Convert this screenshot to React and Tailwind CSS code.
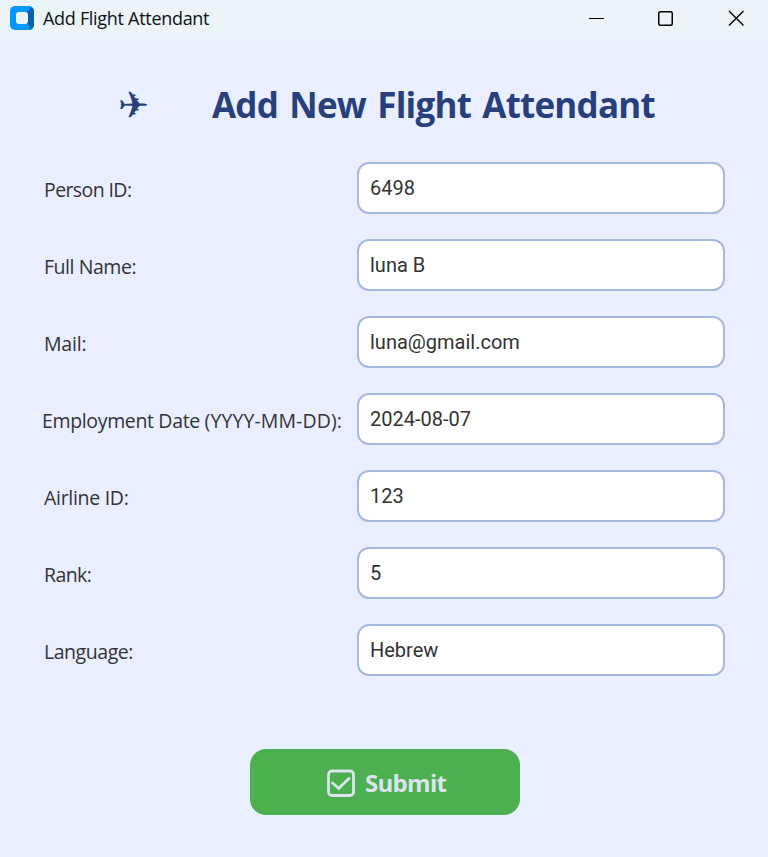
import React, { useState } from "react";

const fields = [
  { label: "Person ID:", value: "6498", style: "tracking-[-0.6px]" },
  { label: "Full Name:", value: "luna B", style: "tracking-[-0.45px]" },
  { label: "Mail:", value: "luna@gmail.com", style: "tracking-[-0.2px]" },
  {
    label: (
      <>
        Employment Date <span className="tracking-[0.1px]">(YYYY-MM-DD):</span>
      </>
    ),
    value: "2024-08-07",
    style: "tracking-[-0.35px] -ml-[2px]",
  },
  { label: "Airline ID:", value: "123", style: "tracking-[-0.3px]" },
  { label: "Rank:", value: "5", style: "tracking-[-0.6px]" },
  { label: "Language:", value: "Hebrew", style: "tracking-[-0.45px]" },
];

function AppIcon() {
  return (
    <svg width="24" height="24" viewBox="0 0 24 24" className="shrink-0">
      <rect width="24" height="24" rx="5" fill="#0797fb" />
      <path d="M17 6L20 1Q24 2 24 6V18Q24 22 20 24L17 18Z" fill="#0560b3" />
      <path d="M5 0H18Q21 0 20 3L17 6H5Z" fill="#0797fb" />
      <path d="M5 18H17L20 21Q20 24 17 24H5Z" fill="#0797fb" />
      <rect x="6" y="6" width="12" height="12" rx="3" fill="#ebf4f9" />
    </svg>
  );
}

function TitleBar() {
  return (
    <header className="flex h-[41px] items-start bg-[#ebf4f9] pl-[10px] pt-[6px]">
      <AppIcon />
      <span className="ml-[9px] text-[18px] leading-6 tracking-[-0.3px] text-[#111] whitespace-nowrap">
        Add Flight Attendant
      </span>
      <div className="ml-auto mr-[24px] mt-[4px] flex text-black">
        <svg width="16" height="16" viewBox="0 0 16 16" className="mr-[53px]">
          <path d="M1 8.5H16" stroke="currentColor" />
        </svg>
        <svg width="16" height="16" viewBox="0 0 16 16" className="mr-[55px]">
          <rect x="1.75" y="1.75" width="13.5" height="13.5" rx="1.5" fill="none" stroke="currentColor" strokeWidth="1.5" />
        </svg>
        <svg width="16" height="16" viewBox="0 0 16 16">
          <path d="M1 1L15.5 15.5M15.5 1L1 15.5" stroke="currentColor" strokeWidth="1.4" />
        </svg>
      </div>
    </header>
  );
}

function Field({ label, value, style }) {
  const [text, setText] = useState(value);
  return (
    <label className="flex h-[52px] items-center">
      <span className="w-[313px] shrink-0 pt-[4px] text-[19.5px] leading-6 text-[#333]">
        <span className={`block whitespace-nowrap ${style}`}>{label}</span>
      </span>
      <input
        value={text}
        onChange={(e) => setText(e.target.value)}
        className="h-[52px] w-[368px] rounded-[12px] border-2 border-[#a5b8de] bg-white px-[11px] font-['Roboto',sans-serif] text-[20px] text-[#333] outline-none"
      />
    </label>
  );
}

export default function App() {
  return (
    <div className="flex h-[857px] w-[768px] flex-col overflow-hidden bg-[#e9efff] font-['Open_Sans',sans-serif]">
      <TitleBar />
      <main className="flex flex-col">
        <h1 className="mt-[40px] flex h-[48px] items-center pl-[118px] font-bold text-[#283f7b]">
          <span className="w-[94px] font-['DejaVu_Sans',sans-serif] text-[37px] font-normal leading-none">✈</span>
          <span className="whitespace-nowrap text-[35px] leading-[48px] tracking-[-0.8px] [word-spacing:3px]">
            Add New Flight Attendant
          </span>
        </h1>
        <form className="mt-[33px] flex flex-col gap-[25px] pl-[44px]" onSubmit={(e) => e.preventDefault()}>
          {fields.map((f) => (
            <Field key={f.value} {...f} />
          ))}
          <button className="ml-[206px] mt-[48px] flex h-[66px] w-[270px] items-center rounded-[16px] bg-[#4caf50] pl-[77px] pt-[2px] text-[#dce4ee]">
            <svg width="28" height="28" viewBox="0 0 28 28" fill="none" stroke="currentColor">
              <rect x="1.5" y="2" width="25" height="24.5" rx="3.5" strokeWidth="2.8" />
              <path d="M5.5 14L11.7 19.3L22 9.5" strokeWidth="2.8" strokeLinecap="round" />
            </svg>
            <span className="ml-[10px] text-[24px] font-bold leading-8 tracking-[-0.7px]">Submit</span>
          </button>
        </form>
      </main>
    </div>
  );
}
